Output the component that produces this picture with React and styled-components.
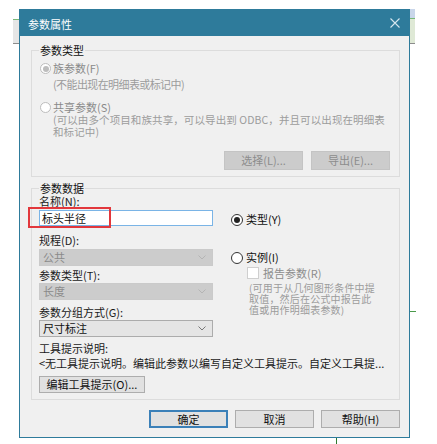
import React from 'react';
import styled, { createGlobalStyle } from 'styled-components';

const GlobalStyle = createGlobalStyle`
  html, body {
    margin: 0;
    padding: 0;
    width: 437px;
    height: 444px;
    overflow: hidden;
    font-family: "Noto Sans CJK SC", "Noto Sans", sans-serif;
    background:
      linear-gradient(#78b878, #78b878) 13px 19px / 7px 1px no-repeat,
      linear-gradient(#e6e6e6, #e6e6e6) 13px 20px / 7px 23px no-repeat,
      linear-gradient(#8c8c8c, #8c8c8c) 13px 43px / 7px 1px no-repeat,
      linear-gradient(#c9d6ea, #c9d6ea) 409px 9px / 6px 9px no-repeat,
      linear-gradient(#78b878, #78b878) 409px 18px / 6px 1px no-repeat,
      linear-gradient(#dfe9d6, #dfe9d6) 409px 19px / 6px 24px no-repeat,
      linear-gradient(#8c8c8c, #8c8c8c) 409px 43px / 6px 1px no-repeat,
      linear-gradient(#4a9a4a, #4a9a4a) 410px 311px / 6px 1px no-repeat,
      linear-gradient(#2f7a2f, #2f7a2f) 336px 438px / 1px 6px no-repeat,
      #ffffff;
  }
`;

const Dialog = styled.div`
  margin: 9px 0 0 19px;
  width: 391px;
  height: 429px;
  box-sizing: border-box;
  border: 1px solid #2e7b9b;
  background: #f0f0f0;
  display: flex;
  flex-direction: column;
`;

const TitleBar = styled.div`
  height: 26px;
  background: #2e7b9b;
  display: flex;
  align-items: center;
  justify-content: space-between;
  padding: 2px 9px 0 8px;
  box-sizing: border-box;
  color: #ffffff;
  font-size: 11px;
`;

const CloseIcon = styled.svg`
  width: 10px;
  height: 10px;
  margin-top: -2px;
`;

const Body = styled.div`
  padding: 14px 9px 0 11px;
  display: flex;
  flex-direction: column;
`;

const GroupBox = styled.div`
  border: 1px solid #dcdcdc;
  padding: 0 ${(p) => p.$padRight}px 6px ${(p) => p.$padLeft}px;
  margin-top: ${(p) => p.$mt || 0}px;
  display: flex;
  flex-direction: column;
`;

const Legend = styled.div`
  margin: -7px 0 0 ${(p) => p.$ml}px;
  padding: 0 1px;
  width: fit-content;
  background: #f0f0f0;
  font-size: 11px;
  line-height: 13px;
  color: #111;
`;

const RadioRow = styled.div`
  display: flex;
  align-items: center;
  gap: ${(p) => p.$gap || 3}px;
  height: 13px;
  margin-top: ${(p) => p.$mt || 0}px;
  font-size: 11px;
  line-height: 13px;
  color: ${(p) => (p.$disabled ? '#8a8a8a' : '#111')};
`;

const Radio = styled.span`
  width: ${(p) => p.$size || 12}px;
  height: ${(p) => p.$size || 12}px;
  box-sizing: border-box;
  border-radius: 50%;
  border: 1px solid ${(p) => (p.$disabled ? '#bdbdbd' : '#333')};
  background: #ffffff;
  display: flex;
  align-items: center;
  justify-content: center;
  flex-shrink: 0;

  &::after {
    content: '';
    display: ${(p) => (p.$checked ? 'block' : 'none')};
    width: 6px;
    height: 6px;
    border-radius: 50%;
    background: ${(p) => (p.$disabled ? '#bdbdbd' : '#222')};
  }
`;

const Note = styled.div`
  margin: ${(p) => p.$mt || 0}px 0 0 ${(p) => p.$ml || 0}px;
  font-size: ${(p) => p.$size || 11}px;
  line-height: ${(p) => p.$lh || 13}px;
  color: #9c9c9c;
  letter-spacing: ${(p) => p.$ls || 0}px;
  white-space: nowrap;
`;

const ButtonRow = styled.div`
  display: flex;
  justify-content: ${(p) => p.$justify || 'flex-end'};
  gap: ${(p) => p.$gap}px;
  margin-top: ${(p) => p.$mt}px;
`;

const Button = styled.button`
  width: ${(p) => p.$w}px;
  height: ${(p) => p.$h}px;
  padding: 0;
  box-sizing: border-box;
  font-family: inherit;
  font-size: 11px;
  line-height: 1;
  color: ${(p) => (p.disabled ? '#8c8c8c' : '#111')};
  background: ${(p) => (p.disabled ? '#cccccc' : '#e1e1e1')};
  border: 1px solid ${(p) => (p.disabled ? '#c4c4c4' : p.$primary ? '#3b80b8' : '#adadad')};
  box-shadow: ${(p) => (p.$primary ? 'inset 0 0 0 1px #3b80b8' : 'none')};
  border-radius: 0;
`;

const FieldGrid = styled.div`
  display: grid;
  grid-template-columns: 174px 1fr;
  column-gap: 18px;
`;

const Column = styled.div`
  display: flex;
  flex-direction: column;
`;

const Label = styled.div`
  margin-top: ${(p) => p.$mt || 0}px;
  font-size: 11px;
  line-height: 13px;
  color: #1a1a1a;
  white-space: nowrap;
`;

const InputWrap = styled.div`
  position: relative;
  margin-top: 2px;
`;

const TextInput = styled.div`
  height: 16px;
  box-sizing: border-box;
  border: 1px solid #7ab4e6;
  background: #ffffff;
  padding-left: 2px;
  font-size: 11px;
  line-height: 14px;
  color: #111;
`;

const Highlight = styled.div`
  position: absolute;
  left: -11px;
  top: -3px;
  width: 83px;
  height: 21px;
  border: 2px solid #e2373c;
  box-sizing: border-box;
  pointer-events: none;
`;

const Select = styled.div`
  margin-top: ${(p) => p.$mt || 0}px;
  height: 17px;
  box-sizing: border-box;
  border: 1px solid ${(p) => (p.$disabled ? '#cacaca' : '#acacac')};
  background: ${(p) => (p.$disabled ? '#cccccc' : '#e5e5e5')};
  color: ${(p) => (p.$disabled ? '#8a8a8a' : '#111')};
  display: flex;
  align-items: center;
  justify-content: space-between;
  padding: 0 6px 0 3px;
  font-size: 11px;
  line-height: 15px;
`;

const Chevron = ({ color }) => (
  <svg width="8" height="5" viewBox="0 0 8 5">
    <polyline points="0.5,0.5 4,4 7.5,0.5" fill="none" stroke={color} strokeWidth="1" />
  </svg>
);

const CheckRow = styled.div`
  display: flex;
  align-items: center;
  gap: 4px;
  margin: 3px 0 0 16px;
  height: 12px;
  font-size: 11px;
  line-height: 13px;
  color: #8c8c8c;
`;

const CheckBox = styled.span`
  width: 12px;
  height: 12px;
  box-sizing: border-box;
  border: 1px solid #cfcfcf;
  background: #ffffff;
`;

export default function App() {
  return (
    <>
      <GlobalStyle />
      <Dialog>
        <TitleBar>
          <span>参数属性</span>
          <CloseIcon viewBox="0 0 10 10">
            <path d="M0.5 0.5 L9.5 9.5 M9.5 0.5 L0.5 9.5" stroke="#d6e6ee" strokeWidth="1.1" />
          </CloseIcon>
        </TitleBar>
        <Body>
          <GroupBox $padLeft={8} $padRight={9}>
            <Legend $ml={-1}>参数类型</Legend>
            <RadioRow $mt={5} $gap={2} $disabled>
              <Radio $size={11} $checked $disabled />
              <span>族参数(F)</span>
            </RadioRow>
            <Note $mt={3} $ml={13} $ls={-0.6}>(不能出现在明细表或标记中)</Note>
            <RadioRow $mt={10} $gap={2} $disabled>
              <Radio $size={11} $disabled />
              <span>共享参数(S)</span>
            </RadioRow>
            <Note $ml={13} $size={10.5} $lh={12} $ls={0.1}>
              (可以由多个项目和族共享，可以导出到 ODBC，并且可以出现在明细表
              <br />
              和标记中)
            </Note>
            <ButtonRow $gap={8} $mt={13}>
              <Button $w={79} $h={19} disabled>选择(L)...</Button>
              <Button $w={79} $h={19} disabled>导出(E)...</Button>
            </ButtonRow>
          </GroupBox>

          <GroupBox $padLeft={7} $padRight={9} $mt={11}>
            <Legend $ml={0}>参数数据</Legend>
            <FieldGrid>
              <Column>
                <Label>名称(N):</Label>
                <InputWrap>
                  <TextInput>标头半径</TextInput>
                  <Highlight />
                </InputWrap>
                <Label $mt={8}>规程(D):</Label>
                <Select $mt={2} $disabled>
                  <span>公共</span>
                  <Chevron color="#b4b4b4" />
                </Select>
                <Label $mt={3}>参数类型(T):</Label>
                <Select $mt={1} $disabled>
                  <span>长度</span>
                  <Chevron color="#b4b4b4" />
                </Select>
                <Label $mt={6}>参数分组方式(G):</Label>
                <Select $mt={1}>
                  <span>尺寸标注</span>
                  <Chevron color="#777" />
                </Select>
              </Column>
              <Column>
                <RadioRow $mt={18}>
                  <Radio $checked />
                  <span>类型(Y)</span>
                </RadioRow>
                <RadioRow $mt={25}>
                  <Radio />
                  <span>实例(I)</span>
                </RadioRow>
                <CheckRow>
                  <CheckBox />
                  <span>报告参数(R)</span>
                </CheckRow>
                <Note $mt={3} $ml={18} $size={10} $lh={11} $ls={0.2}>
                  (可用于从几何图形条件中提
                  <br />
                  取值，然后在公式中报告此
                  <br />
                  值或用作明细表参数)
                </Note>
              </Column>
            </FieldGrid>
            <Label $mt={5}>工具提示说明:</Label>
            <Label $mt={2}>&lt;无工具提示说明。编辑此参数以编写自定义工具提示。自定义工具提...</Label>
            <ButtonRow $gap={0} $mt={6} $justify="flex-start">
              <Button $w={106} $h={17}>编辑工具提示(O)...</Button>
            </ButtonRow>
          </GroupBox>

          <ButtonRow $gap={7} $mt={10}>
            <Button $w={79} $h={18} $primary>确定</Button>
            <Button $w={79} $h={18}>取消</Button>
            <Button $w={79} $h={18}>帮助(H)</Button>
          </ButtonRow>
        </Body>
      </Dialog>
    </>
  );
}
